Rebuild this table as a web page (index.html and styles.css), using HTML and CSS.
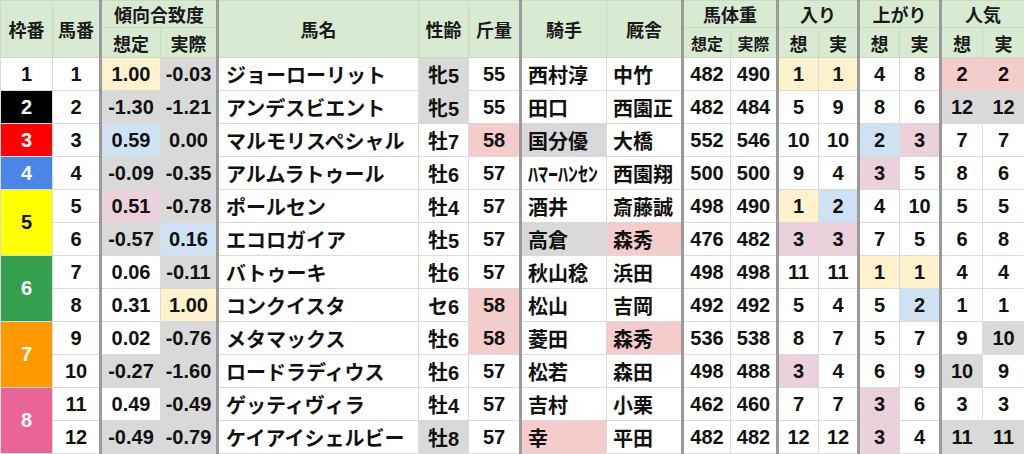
FILE: index.html
```html
<!DOCTYPE html>
<html lang="ja">
<head>
<meta charset="utf-8">
<title>出走表</title>
<link rel="stylesheet" href="styles.css">
</head>
<body>
<table class="race">
  <colgroup>
    <col style="width:52px"><col style="width:48px">
    <col style="width:60px"><col style="width:57px">
    <col style="width:201px"><col style="width:50px"><col style="width:52px">
    <col style="width:86px"><col style="width:76px">
    <col style="width:48px"><col style="width:47px">
    <col style="width:41px"><col style="width:40px">
    <col style="width:41px"><col style="width:41px">
    <col style="width:42px"><col style="width:42px">
  </colgroup>
  <thead>
    <tr class="h1">
      <th rowspan="2">枠番</th>
      <th rowspan="2">馬番</th>
      <th colspan="2" class="tk">傾向合致度</th>
      <th rowspan="2" class="tk">馬名</th>
      <th rowspan="2">性齢</th>
      <th rowspan="2">斤量</th>
      <th rowspan="2" class="tk">騎手</th>
      <th rowspan="2">厩舎</th>
      <th colspan="2" class="tk">馬体重</th>
      <th colspan="2" class="tk">入り</th>
      <th colspan="2" class="tk">上がり</th>
      <th colspan="2" class="tk">人気</th>
    </tr>
    <tr class="h2">
      <th class="tk">想定</th><th>実際</th>
      <th class="tk sm">想定</th><th class="sm">実際</th>
      <th class="tk">想</th><th>実</th>
      <th class="tk">想</th><th>実</th>
      <th class="tk">想</th><th>実</th>
    </tr>
  </thead>
  <tbody>
    <tr>
      <td class="w1">1</td><td>1</td>
      <td class="tk yl">1.00</td><td class="gy">-0.03</td>
      <td class="tk nm">ジョーローリット</td><td class="gy">牝5</td><td>55</td>
      <td class="tk nm2">西村淳</td><td class="nm2">中竹</td>
      <td class="tk">482</td><td>490</td>
      <td class="tk yl">1</td><td class="yl">1</td>
      <td class="tk">4</td><td>8</td>
      <td class="tk rd">2</td><td class="rd">2</td>
    </tr>
    <tr>
      <td class="w2">2</td><td>2</td>
      <td class="tk gy">-1.30</td><td class="gy">-1.21</td>
      <td class="tk nm">アンデスビエント</td><td class="gy">牝5</td><td>55</td>
      <td class="tk nm2">田口</td><td class="nm2">西園正</td>
      <td class="tk">482</td><td>484</td>
      <td class="tk">5</td><td>9</td>
      <td class="tk">8</td><td>6</td>
      <td class="tk gy">12</td><td class="gy">12</td>
    </tr>
    <tr>
      <td class="w3">3</td><td>3</td>
      <td class="tk bl">0.59</td><td class="gy">0.00</td>
      <td class="tk nm">マルモリスペシャル</td><td>牡7</td><td class="rd">58</td>
      <td class="tk nm2 gy">国分優</td><td class="nm2">大橋</td>
      <td class="tk">552</td><td>546</td>
      <td class="tk">10</td><td>10</td>
      <td class="tk bl">2</td><td class="pk">3</td>
      <td class="tk">7</td><td>7</td>
    </tr>
    <tr>
      <td class="w4">4</td><td>4</td>
      <td class="tk gy">-0.09</td><td class="gy">-0.35</td>
      <td class="tk nm">アルムラトゥール</td><td>牡6</td><td>57</td>
      <td class="tk nm2">ﾊﾏｰﾊﾝｾﾝ</td><td class="nm2">西園翔</td>
      <td class="tk">500</td><td>500</td>
      <td class="tk">9</td><td>4</td>
      <td class="tk pk">3</td><td>5</td>
      <td class="tk">8</td><td>6</td>
    </tr>
    <tr>
      <td class="w5" rowspan="2">5</td><td>5</td>
      <td class="tk pk">0.51</td><td class="gy">-0.78</td>
      <td class="tk nm">ポールセン</td><td>牡4</td><td>57</td>
      <td class="tk nm2">酒井</td><td class="nm2">斎藤誠</td>
      <td class="tk">498</td><td>490</td>
      <td class="tk yl">1</td><td class="bl">2</td>
      <td class="tk">4</td><td>10</td>
      <td class="tk">5</td><td>5</td>
    </tr>
    <tr>
      <td>6</td>
      <td class="tk gy">-0.57</td><td class="bl">0.16</td>
      <td class="tk nm">エコロガイア</td><td>牡5</td><td>57</td>
      <td class="tk nm2 gy">高倉</td><td class="nm2 rd">森秀</td>
      <td class="tk">476</td><td>482</td>
      <td class="tk pk">3</td><td class="pk">3</td>
      <td class="tk">7</td><td>5</td>
      <td class="tk">6</td><td>8</td>
    </tr>
    <tr>
      <td class="w6" rowspan="2">6</td><td>7</td>
      <td class="tk">0.06</td><td class="gy">-0.11</td>
      <td class="tk nm">バトゥーキ</td><td>牡6</td><td>57</td>
      <td class="tk nm2">秋山稔</td><td class="nm2">浜田</td>
      <td class="tk">498</td><td>498</td>
      <td class="tk">11</td><td>11</td>
      <td class="tk yl">1</td><td class="yl">1</td>
      <td class="tk">4</td><td>4</td>
    </tr>
    <tr>
      <td>8</td>
      <td class="tk">0.31</td><td class="yl">1.00</td>
      <td class="tk nm">コンクイスタ</td><td>セ6</td><td class="rd">58</td>
      <td class="tk nm2">松山</td><td class="nm2">吉岡</td>
      <td class="tk">492</td><td>492</td>
      <td class="tk">5</td><td>4</td>
      <td class="tk">5</td><td class="bl">2</td>
      <td class="tk">1</td><td>1</td>
    </tr>
    <tr>
      <td class="w7" rowspan="2">7</td><td>9</td>
      <td class="tk">0.02</td><td class="gy">-0.76</td>
      <td class="tk nm">メタマックス</td><td>牡6</td><td class="rd">58</td>
      <td class="tk nm2">菱田</td><td class="nm2 rd">森秀</td>
      <td class="tk">536</td><td>538</td>
      <td class="tk">8</td><td>7</td>
      <td class="tk">5</td><td>7</td>
      <td class="tk">9</td><td class="gy">10</td>
    </tr>
    <tr>
      <td>10</td>
      <td class="tk gy">-0.27</td><td class="gy">-1.60</td>
      <td class="tk nm">ロードラディウス</td><td>牡6</td><td>57</td>
      <td class="tk nm2">松若</td><td class="nm2">森田</td>
      <td class="tk">498</td><td>488</td>
      <td class="tk pk">3</td><td>4</td>
      <td class="tk">6</td><td>9</td>
      <td class="tk gy">10</td><td>9</td>
    </tr>
    <tr>
      <td class="w8" rowspan="2">8</td><td>11</td>
      <td class="tk">0.49</td><td class="gy">-0.49</td>
      <td class="tk nm">ゲッティヴィラ</td><td>牡4</td><td>57</td>
      <td class="tk nm2">吉村</td><td class="nm2">小栗</td>
      <td class="tk">462</td><td>460</td>
      <td class="tk">7</td><td>7</td>
      <td class="tk pk">3</td><td>6</td>
      <td class="tk">3</td><td>3</td>
    </tr>
    <tr>
      <td>12</td>
      <td class="tk gy">-0.49</td><td class="gy">-0.79</td>
      <td class="tk nm">ケイアイシェルビー</td><td class="gy">牡8</td><td>57</td>
      <td class="tk nm2 rd">幸</td><td class="nm2">平田</td>
      <td class="tk">482</td><td>482</td>
      <td class="tk">12</td><td>12</td>
      <td class="tk pk">3</td><td>4</td>
      <td class="tk gy">11</td><td class="gy">11</td>
    </tr>
  </tbody>
</table>
</body>
</html>
```

FILE: styles.css
```css
html, body {
  margin: 0;
  padding: 0;
  background: #ffffff;
}

.race {
  border-collapse: collapse;
  table-layout: fixed;
  width: 1024px;
  font-family: "Liberation Sans", "Noto Sans CJK JP", sans-serif;
  font-weight: bold;
  color: #111111;
}

.race th,
.race td {
  border: 1px solid #dadada;
  padding: 0;
  text-align: center;
  vertical-align: middle;
  white-space: nowrap;
  overflow: hidden;
}

.race th {
  background: #d9ead3;
  font-size: 18px;
  border-color: #c9dcc2;
  color: #1a1a1a;
}

.race .h1 th {
  height: 26px;
}

.race .h2 th {
  height: 29px;
}

.race th.sm {
  font-size: 16px;
}

.race td {
  font-size: 20px;
  height: 32px;
}

.race .tk {
  border-left: 3px solid #9a9a9a;
}

.race td.nm {
  text-align: left;
  padding-left: 7px;
}

.race td.nm2 {
  text-align: left;
  padding-left: 6px;
}

.yl { background: #fff2cc; }
.gy { background: #d9d9d9; }
.bl { background: #cfe2f3; }
.pk { background: #ead1dc; }
.rd { background: #f4cccc; }

.w1 { background: #ffffff; color: #111111; }
.w2 { background: #000000; color: #ffffff; }
.w3 { background: #ff0000; color: #ffffff; }
.w4 { background: #4a86e8; color: #ffffff; }
.w5 { background: #ffff00; color: #111111; }
.w6 { background: #34a04f; color: #ffffff; }
.w7 { background: #ff9900; color: #ffffff; }
.w8 { background: #eb6496; color: #ffffff; }
```
